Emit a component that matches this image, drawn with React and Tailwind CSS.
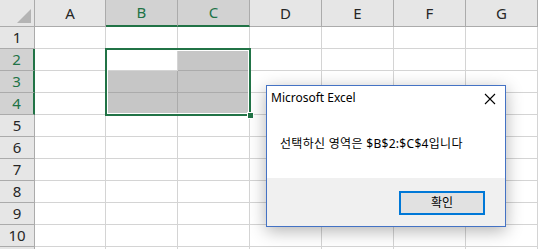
const cols = ["A", "B", "C", "D", "E", "F", "G"];
const rows = [1, 2, 3, 4, 5, 6, 7, 8, 9, 10, 11];
const selCols = ["B", "C"];
const selRows = [2, 3, 4];

function Corner() {
  return (
    <div className="relative bg-[#e6e6e6] border-r border-b border-[#ababab]">
      <div className="absolute right-[3px] bottom-[3px] w-[14px] h-[14px] bg-[#b4b4b4] [clip-path:polygon(100%_0,100%_100%,0_100%)]" />
    </div>
  );
}

function ColHeader({ c }) {
  const sel = selCols.includes(c);
  return (
    <div
      className={
        sel
          ? "flex items-center justify-center bg-[#d2d2d2] text-[#217346] border-r border-[#ababab] border-b-2 border-b-[#217346] text-[15px]"
          : "flex items-center justify-center bg-[#e6e6e6] text-[#262626] border-r border-b border-[#ababab] text-[15px]"
      }
    >
      {c}
    </div>
  );
}

function RowHeader({ r }) {
  const sel = selRows.includes(r);
  return (
    <div
      className={
        sel
          ? "flex items-center justify-center bg-[#d2d2d2] text-[#217346] border-b border-[#ababab] border-r-2 border-r-[#217346] text-[15px]"
          : "flex items-center justify-center bg-[#e6e6e6] text-[#262626] border-b border-r border-[#ababab] text-[15px]"
      }
    >
      {r < 11 ? r : ""}
    </div>
  );
}

function Cell({ r, c }) {
  const sel = selRows.includes(r) && selCols.includes(c) && !(r === 2 && c === "B");
  return (
    <div
      className={
        sel
          ? "bg-[#c6c6c6] border-r border-b border-[#ababab]"
          : "bg-white border-r border-b border-[#d4d4d4]"
      }
    />
  );
}

function Dialog() {
  return (
    <div className="absolute left-[266px] top-[85px] w-[240px] h-[142px] flex flex-col bg-white border border-[#4472c4] shadow-[0_4px_16px_rgba(0,0,0,0.3)]">
      <div className="flex items-center justify-between h-[24px] pl-[4px] pr-[9px] text-[12px] text-black">
        <span>Microsoft Excel</span>
        <svg width="12" height="12" viewBox="0 0 12 12" className="mt-[1px]">
          <path d="M1 1 L11 11 M11 1 L1 11" stroke="#000" strokeWidth="1.1" fill="none" />
        </svg>
      </div>
      <div className="flex-1 flex items-center pl-[13px] pb-[1px] text-[12px] tracking-[0.3px] text-black">
        선택하신 영역은 $B$2:$C$4입니다
      </div>
      <div className="h-[48px] bg-[#f0f0f0] flex items-start justify-end pt-[13px] pr-[20px]">
        <button className="w-[86px] h-[24px] bg-[#e1e1e1] border-2 border-[#0078d7] text-[12px] text-black flex items-center justify-center">
          확인
        </button>
      </div>
    </div>
  );
}

export default function App() {
  return (
    <div
      className="relative w-[540px] h-[249px] overflow-hidden bg-white"
      style={{ fontFamily: '"Noto Sans", "Noto Sans CJK KR", sans-serif' }}
    >
      <div className="grid grid-cols-[35px_71px_72px_72px_72px_72px_72px_72px] grid-rows-[27px_repeat(11,22px)]">
        <Corner />
        {cols.map((c) => (
          <ColHeader key={c} c={c} />
        ))}
        {rows.map((r) => (
          <div key={r} className="contents">
            <RowHeader r={r} />
            {cols.map((c) => (
              <Cell key={c} r={r} c={c} />
            ))}
          </div>
        ))}
      </div>

      {/* selection outline */}
      <div className="absolute left-[105px] top-[48px] w-[146px] h-[68px] border-2 border-[#217346]">
        <div className="w-full h-full border border-white" />
      </div>
      <div className="absolute left-[247px] top-[112px] w-[7px] h-[7px] bg-[#217346] border border-white" />

      <Dialog />
    </div>
  );
}
